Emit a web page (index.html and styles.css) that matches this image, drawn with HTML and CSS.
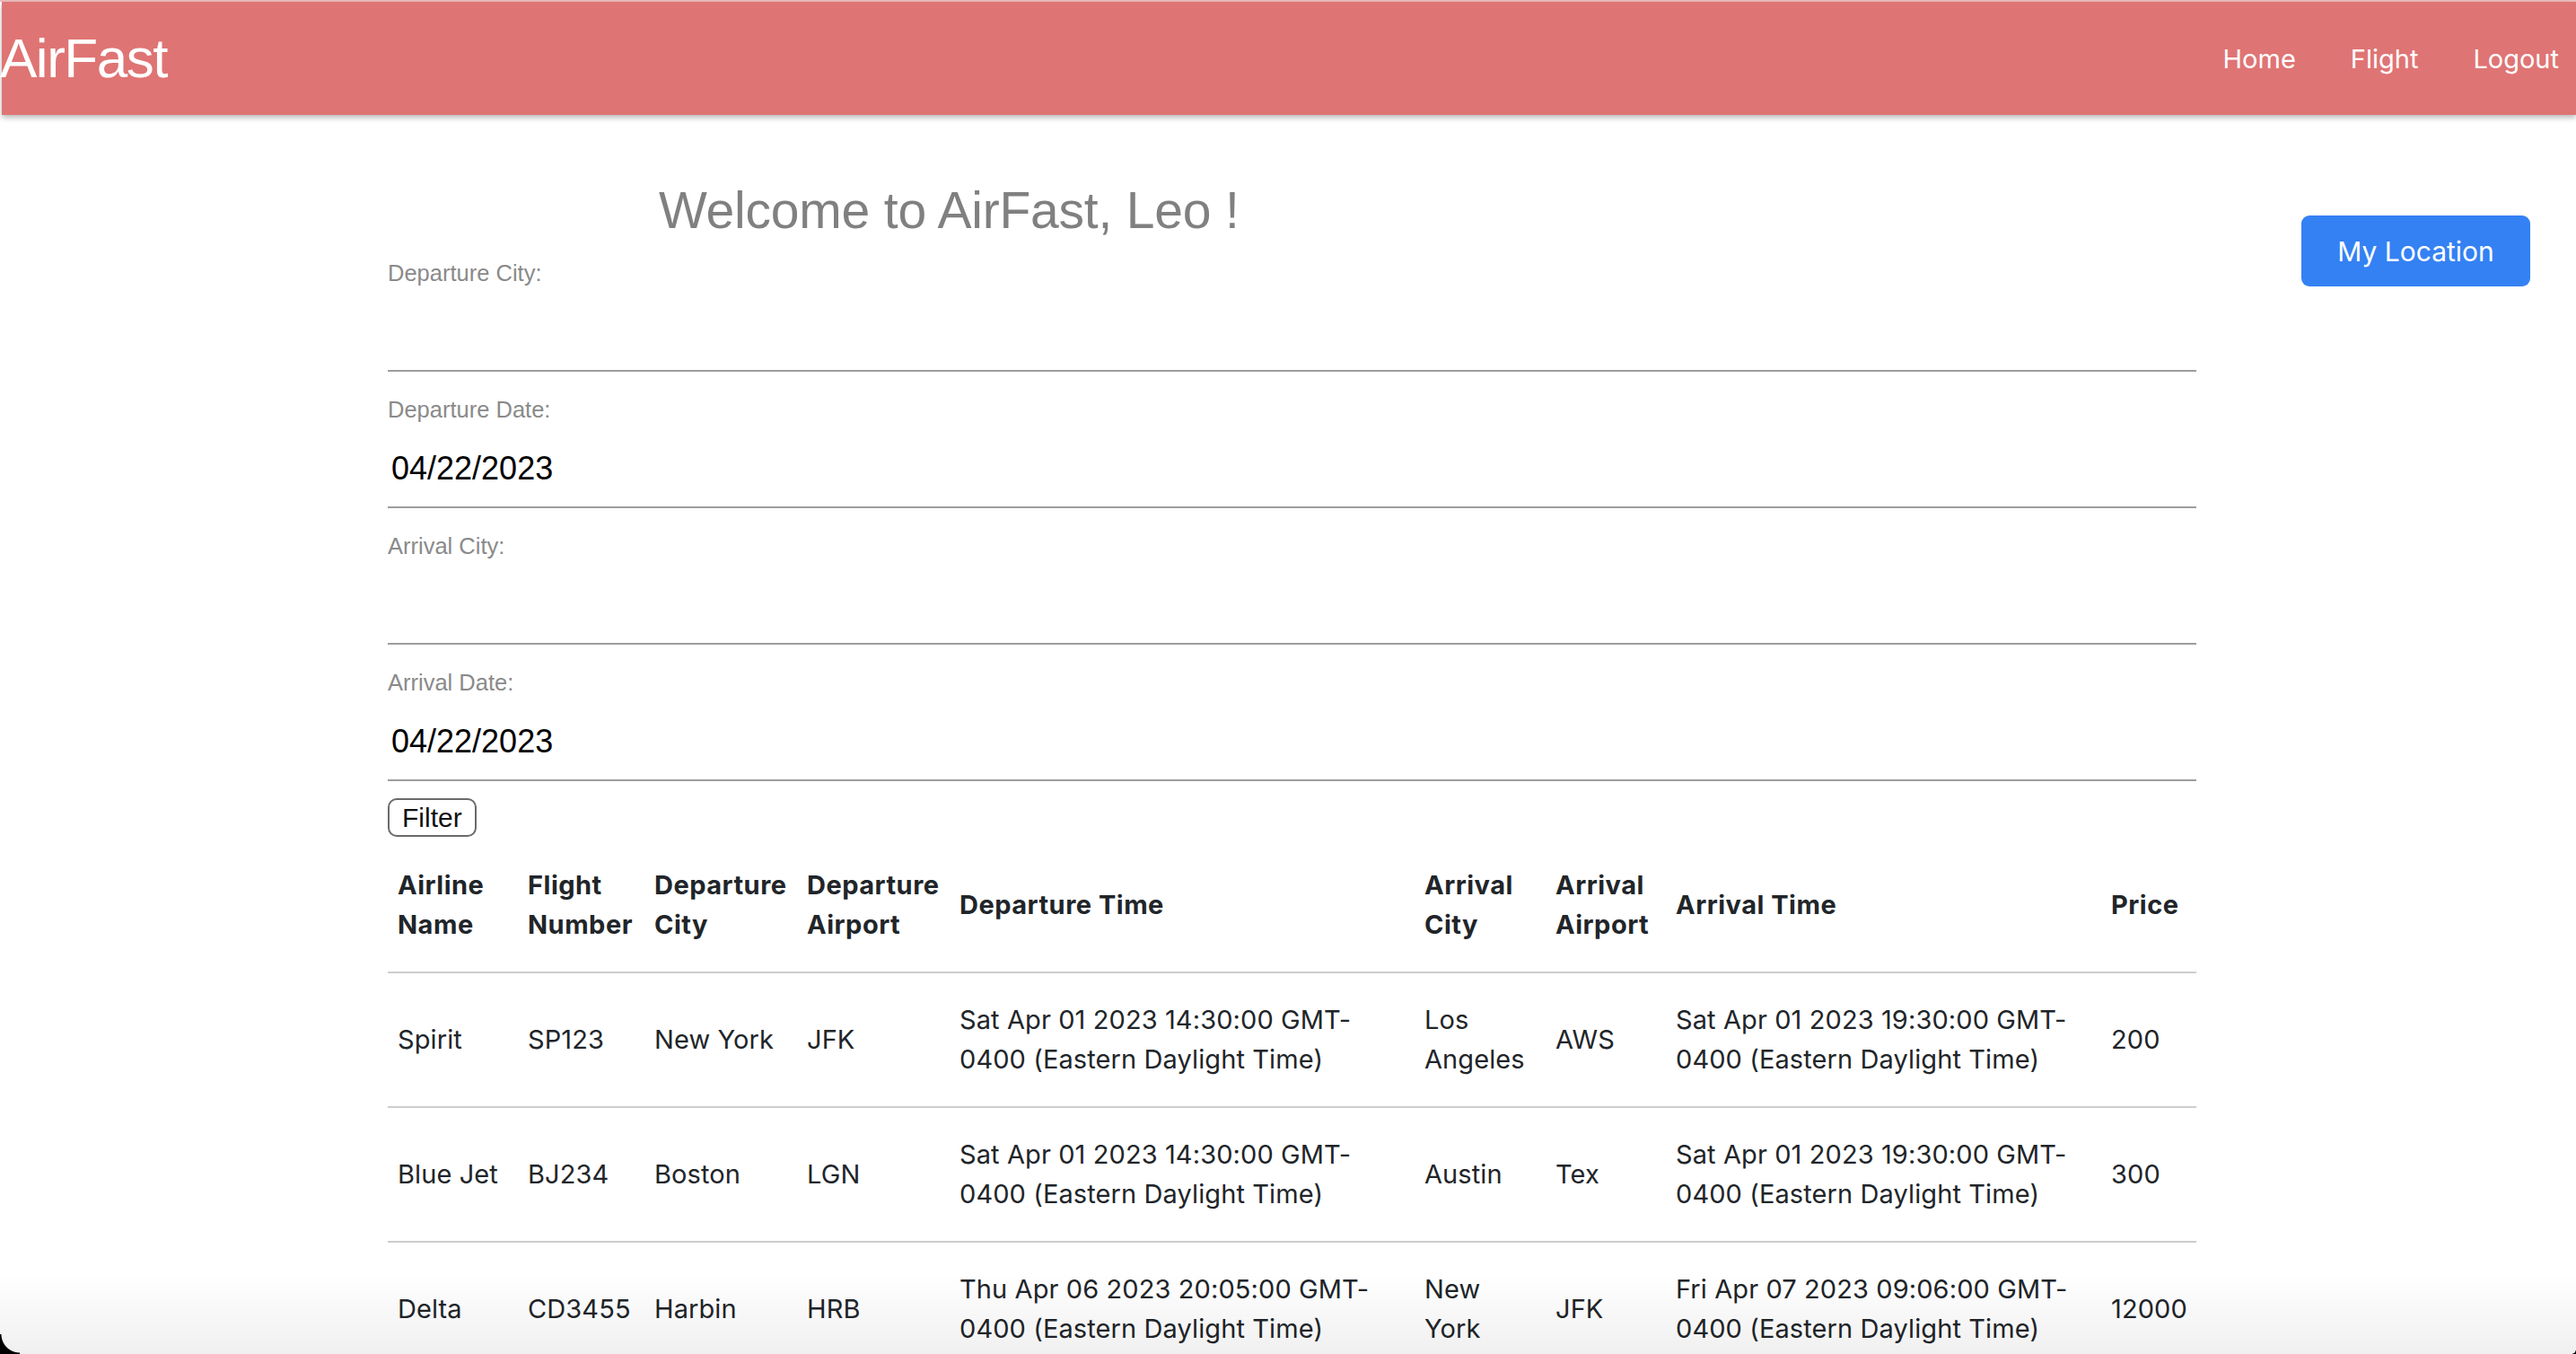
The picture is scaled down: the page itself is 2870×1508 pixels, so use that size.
FILE: index.html
```html
<!DOCTYPE html>
<html lang="en">
<head>
<meta charset="utf-8">
<title>AirFast</title>
<link rel="stylesheet" href="styles.css">
</head>
<body>
<header class="topbar">
  <nav class="navbar">
    <a class="brand" href="#">AirFast</a>
    <ul class="nav-links">
      <li><a href="#">Home</a></li>
      <li><a href="#">Flight</a></li>
      <li><a href="#">Logout</a></li>
    </ul>
  </nav>
</header>

<main class="page">
  <div class="gutter"></div>
  <section class="content">
    <h1 class="welcome">Welcome to AirFast, Leo !</h1>
    <form class="filter-form">
      <div class="field">
        <label class="field-label">Departure City:</label>
        <input class="field-input" type="text" value="">
      </div>
      <div class="field">
        <label class="field-label">Departure Date:</label>
        <input class="field-input" type="text" value="04/22/2023">
      </div>
      <div class="field">
        <label class="field-label">Arrival City:</label>
        <input class="field-input" type="text" value="">
      </div>
      <div class="field">
        <label class="field-label">Arrival Date:</label>
        <input class="field-input" type="text" value="04/22/2023">
      </div>
      <button class="btn-filter" type="button">Filter</button>
    </form>

    <table class="flights">
      <colgroup>
        <col class="c-airline">
        <col class="c-flight">
        <col class="c-depcity">
        <col class="c-depair">
        <col class="c-deptime">
        <col class="c-arrcity">
        <col class="c-arrair">
        <col class="c-arrtime">
        <col class="c-price">
      </colgroup>
      <thead>
        <tr>
          <th>Airline<br>Name</th>
          <th>Flight<br>Number</th>
          <th>Departure<br>City</th>
          <th>Departure<br>Airport</th>
          <th>Departure Time</th>
          <th>Arrival<br>City</th>
          <th>Arrival<br>Airport</th>
          <th>Arrival Time</th>
          <th>Price</th>
        </tr>
      </thead>
      <tbody>
        <tr>
          <td>Spirit</td>
          <td>SP123</td>
          <td>New York</td>
          <td>JFK</td>
          <td>Sat Apr 01 2023 14:30:00 GMT-<br>0400 (Eastern Daylight Time)</td>
          <td>Los<br>Angeles</td>
          <td>AWS</td>
          <td>Sat Apr 01 2023 19:30:00 GMT-<br>0400 (Eastern Daylight Time)</td>
          <td>200</td>
        </tr>
        <tr>
          <td>Blue Jet</td>
          <td>BJ234</td>
          <td>Boston</td>
          <td>LGN</td>
          <td>Sat Apr 01 2023 14:30:00 GMT-<br>0400 (Eastern Daylight Time)</td>
          <td>Austin</td>
          <td>Tex</td>
          <td>Sat Apr 01 2023 19:30:00 GMT-<br>0400 (Eastern Daylight Time)</td>
          <td>300</td>
        </tr>
        <tr>
          <td>Delta</td>
          <td>CD3455</td>
          <td>Harbin</td>
          <td>HRB</td>
          <td>Thu Apr 06 2023 20:05:00 GMT-<br>0400 (Eastern Daylight Time)</td>
          <td>New<br>York</td>
          <td>JFK</td>
          <td>Fri Apr 07 2023 09:06:00 GMT-<br>0400 (Eastern Daylight Time)</td>
          <td>12000</td>
        </tr>
      </tbody>
    </table>
  </section>
  <aside class="side">
    <button class="btn-location" type="button">My Location</button>
  </aside>
</main>

<div class="screen-shade"></div>
<div class="corner corner-bl"></div>
<div class="corner corner-br"></div>
</body>
</html>
```

FILE: styles.css
```css
html, body {
  margin: 0;
  padding: 0;
  background: #ffffff;
}

body {
  font-family: "Liberation Sans", Arial, sans-serif;
  color: #212529;
}

/* ---------- top bar ---------- */
.topbar {
  border-top: 2px solid #efbcbc;
  position: relative;
  z-index: 2;
}

.navbar {
  margin-left: 2px;
  height: 126px;
  background: #df7474;
  display: flex;
  align-items: center;
  justify-content: space-between;
  box-shadow: 0 3px 6px rgba(0, 0, 0, 0.28);
}

.brand {
  font-family: "Liberation Sans", Arial, sans-serif;
  font-size: 62px;
  line-height: 1;
  letter-spacing: -1.5px;
  color: #ffffff;
  text-decoration: none;
  margin-left: -2px;
}

.nav-links {
  list-style: none;
  margin: 0;
  padding: 0 19px 0 0;
  display: flex;
  gap: 61px;
}

.nav-links a {
  font-family: Inter, "Noto Sans", sans-serif;
  font-size: 29px;
  line-height: 1;
  color: #ffffff;
  text-decoration: none;
}

/* ---------- page grid ---------- */
.page {
  display: grid;
  grid-template-columns: 432px 2015px 1fr;
  padding-top: 77px;
}

.side {
  display: flex;
  justify-content: flex-end;
  align-items: flex-start;
  padding-right: 51px;
}

.btn-location {
  margin-top: 35px;
  width: 255px;
  height: 79px;
  padding: 0;
  border: none;
  border-radius: 9px;
  background: #3481f4;
  color: #ffffff;
  font-family: Inter, "Noto Sans", sans-serif;
  font-size: 30px;
  line-height: 1;
}

/* ---------- heading ---------- */
.welcome {
  margin: 0 0 -1px 0;
  padding-left: 302px;
  font-family: "Liberation Sans", Arial, sans-serif;
  font-weight: normal;
  font-size: 57px;
  line-height: 58px;
  letter-spacing: -0.2px;
  color: #808080;
}

/* ---------- form ---------- */
.filter-form {
  display: flex;
  flex-direction: column;
  align-items: flex-start;
}

.field {
  align-self: stretch;
  display: flex;
  flex-direction: column;
  padding-top: 28px;
}

.field-label {
  font-size: 25.5px;
  line-height: 28px;
  color: #8a8a8a;
}

.field-input {
  margin-top: 30px;
  height: 66px;
  box-sizing: border-box;
  padding: 0 0 21px 4px;
  border: none;
  border-bottom: 2px solid #9d9d9d;
  outline: none;
  background: transparent;
  font-family: "Liberation Sans", Arial, sans-serif;
  font-size: 36px;
  line-height: 42px;
  color: #000000;
}

.btn-filter {
  margin-top: 19px;
  height: 43px;
  padding: 0 14px;
  border: 2px solid #6a6a6a;
  border-radius: 10px;
  background: #ffffff;
  font-family: "Liberation Sans", Arial, sans-serif;
  font-size: 30px;
  line-height: 1;
  color: #111111;
}

/* ---------- table ---------- */
.flights {
  margin-top: 2px;
  width: 2015px;
  table-layout: fixed;
  border-collapse: collapse;
  font-family: Inter, "Noto Sans", sans-serif;
  font-size: 29px;
  color: #212529;
}

.c-airline { width: 145px; }
.c-flight { width: 141px; }
.c-depcity { width: 170px; }
.c-depair { width: 170px; }
.c-deptime { width: 518px; }
.c-arrcity { width: 146px; }
.c-arrair { width: 134px; }
.c-arrtime { width: 485px; }
.c-price { width: 106px; }

.flights th,
.flights td {
  padding: 30px 11px;
  line-height: 44px;
  text-align: left;
  vertical-align: middle;
  white-space: nowrap;
  border-bottom: 2px solid #cdcdcd;
}

.flights th {
  font-weight: 700;
  letter-spacing: 0.5px;
}

.flights td {
  font-weight: 400;
  letter-spacing: 0.1px;
}

/* ---------- screenshot window chrome ---------- */
.screen-shade {
  position: fixed;
  left: 0;
  right: 0;
  bottom: 0;
  height: 90px;
  background: linear-gradient(to bottom, rgba(0, 0, 0, 0), rgba(0, 0, 0, 0.06));
  pointer-events: none;
  z-index: 5;
}

.corner {
  position: fixed;
  bottom: 0;
  pointer-events: none;
  z-index: 6;
}

.corner-bl {
  left: 0;
  width: 22px;
  height: 22px;
  background: radial-gradient(circle at 100% 0, rgba(0, 0, 0, 0) 20px, #000 21px);
}

.corner-br {
  right: 0;
  width: 4px;
  height: 4px;
  background: radial-gradient(circle at 0 0, rgba(0, 0, 0, 0) 3px, #000 4px);
}
```
